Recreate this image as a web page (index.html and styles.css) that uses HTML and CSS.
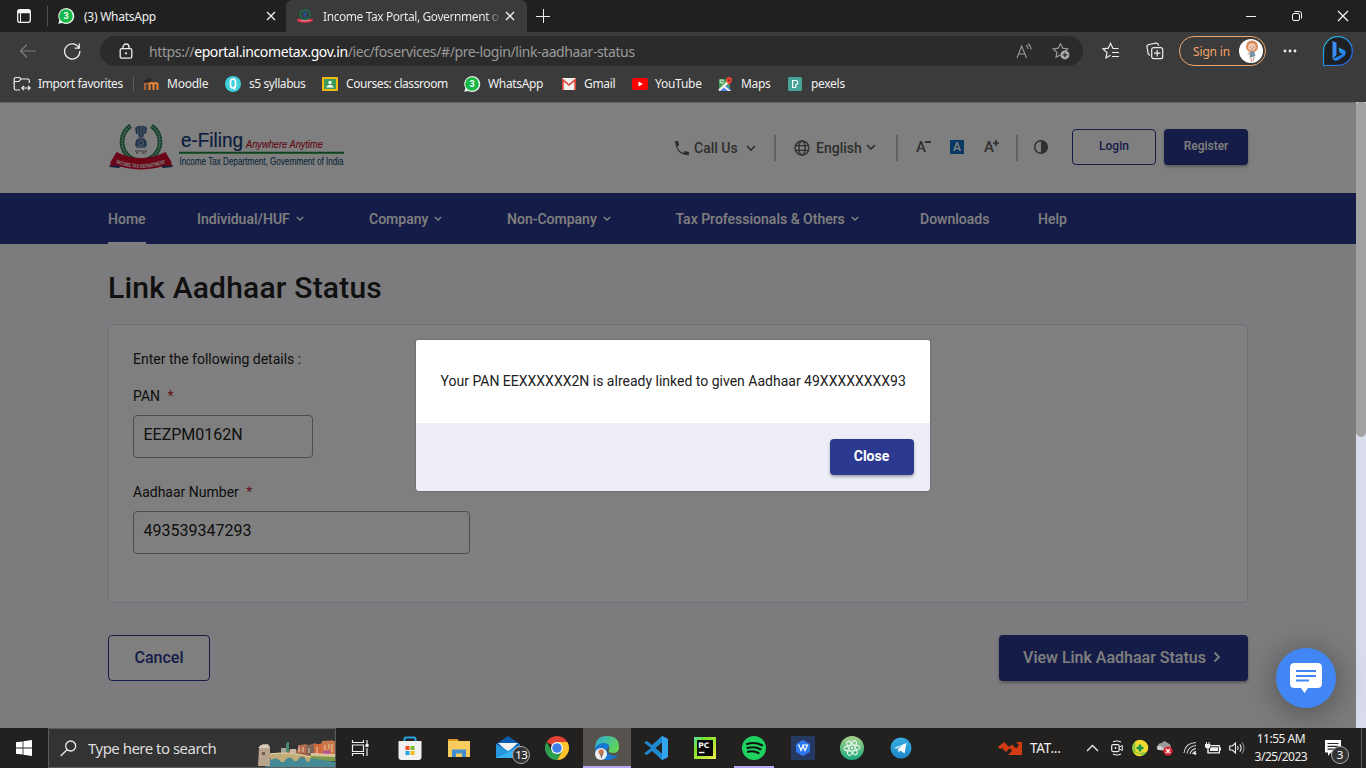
FILE: index.html
```html
<!DOCTYPE html>
<html lang="en">
<head>
<meta charset="utf-8">
<title>Income Tax Portal, Government of India</title>
<link rel="stylesheet" href="styles.css">
</head>
<body>
<svg width="0" height="0" class="defs" aria-hidden="true">
  <defs>
    <linearGradient id="bing" x1="0" y1="0" x2="1" y2="1"><stop offset="0" stop-color="#2ac3d8"/><stop offset="1" stop-color="#2458f0"/></linearGradient>
    <linearGradient id="edge" x1="0" y1="0" x2="1" y2="0.5"><stop offset="0" stop-color="#2aa9df"/><stop offset="1" stop-color="#61d45a"/></linearGradient>
    <linearGradient id="atom" x1="0" y1="0" x2="0" y2="1"><stop offset="0" stop-color="#a9d18a"/><stop offset="1" stop-color="#18a97c"/></linearGradient>
    <linearGradient id="tele" x1="0" y1="0" x2="0" y2="1"><stop offset="0" stop-color="#37aee2"/><stop offset="1" stop-color="#1c88c8"/></linearGradient>
    <linearGradient id="pyc" x1="0" y1="0" x2="1" y2="1"><stop offset="0" stop-color="#4ee0a0"/><stop offset=".3" stop-color="#7de22c"/><stop offset="1" stop-color="#f2e84a"/></linearGradient>
  </defs>
  <symbol id="close" viewBox="0 0 10 10"><path d="m1 1 8 8M9 1 1 9" fill="none" stroke="#f2f2f2" stroke-width="1.3"/></symbol>
  <symbol id="chev" viewBox="0 0 10 6"><path d="m1 1 4 4 4-4" fill="none" stroke="currentColor" stroke-width="1.7"/></symbol>
</svg>

<div class="tabbar">
  <svg class="workspace" width="16" height="16" viewBox="0 0 16 16"><rect x="1.700" y="1.700" width="12.600" height="12.600" rx="2" fill="none" stroke="#f4f4f4" stroke-width="1.300"/><path d="M2 2h12v3.200H2zM4 5h1v9H4z" fill="#f4f4f4"/></svg>
  <i class="tab-sep"></i>
  <svg class="tab-ico" width="16" height="16" viewBox="0 0 16 16"><path d="M.3 15.700 1.300 12A8 8 0 1 1 4.300 15Z" fill="#e8f5ea"/><circle cx="8" cy="8" r="6.800" fill="#18b848"/><text x="8" y="11.400" text-anchor="middle" class="wa-num">3</text></svg>
  <span class="tab-title">(3) WhatsApp</span>
  <svg class="tab-x" width="10" height="10"><use href="#close"/></svg>
  <div class="tab-active">
    <svg width="16" height="16" viewBox="0 0 16 16"><circle cx="8" cy="6.500" r="4.800" fill="none" stroke="#17744a" stroke-width="1.400"/><path d="M6.500 3.500h3v5.500h-3z" fill="#21508e"/><path d="M.6 10.200q7.400 4.500 14.800 0l.4 3q-7.800 3-15.600 0z" fill="#e3344a"/><path d="M3 12q5 1.800 10 0" stroke="#f5aab2" stroke-width=".8" fill="none"/></svg>
    <span class="tab-title">Income Tax Portal, Government o</span>
    <svg class="tab-x2" width="10" height="10"><use href="#close"/></svg>
  </div>
  <svg class="newtab" width="14" height="14" viewBox="0 0 14 14"><path d="M7.500 0v14M0 7.500h14" stroke="#eee" fill="none"/></svg>
  <div class="winctl">
    <svg width="12" height="12" viewBox="0 0 12 12"><path d="M1 6.500h10" stroke="#f4f4f4"/></svg>
    <svg width="12" height="12" viewBox="0 0 12 12"><rect x="1.500" y="3.500" width="7" height="7" rx="1.500" fill="none" stroke="#f4f4f4"/><path d="M3.500 1.500h5q2 0 2 2v5" fill="none" stroke="#f4f4f4"/></svg>
    <svg width="12" height="12" viewBox="0 0 12 12"><path d="m1 1 10 10M11 1 1 11" fill="none" stroke="#fff" stroke-width="1.100"/></svg>
  </div>
</div>

<div class="toolbar">
  <svg class="back" width="18" height="16" viewBox="0 0 18 16"><path d="M17 8H1.500M8 1.500 1.500 8 8 14.500" fill="none" stroke="#7d7d7d" stroke-width="1.200"/></svg>
  <svg class="reload" width="18" height="18" viewBox="0 0 18 18"><path d="M16 6A7.600 7.600 0 1 0 16.800 9M16.300 1.500V6.200H11.600" fill="none" stroke="#eee" stroke-width="1.300"/></svg>
  <div class="address">
    <svg class="lock" width="14" height="16" viewBox="0 0 14 16"><rect x="1.200" y="5.600" width="11.600" height="9.600" rx="1.500" fill="none" stroke="#eee" stroke-width="1.300"/><path d="M4 5.500V4a3 3 0 0 1 6 0v1.500" fill="none" stroke="#eee" stroke-width="1.300"/><circle cx="7" cy="10.300" r="1.100" fill="#eee"/></svg>
    <span class="url">https://<b>eportal.incometax.gov.in</b>/iec/foservices/#/pre-login/link-aadhaar-status</span>
    <svg class="aloud" width="16" height="16" viewBox="0 0 16 16"><path d="M1 15 5.700 3 10.500 15M2.600 11h6.300M10 2.200q2 1.300 2 3.800M12 .7q3 2.300 3 5.800" fill="none" stroke="#999" stroke-width="1.100"/></svg>
    <svg class="addfav" width="18" height="18" viewBox="0 0 18 18"><path d="m8.500 1.500 2.200 4.700 5 .7-3.600 3.500M8.500 12.800 4 15.300l.9-5L1.200 6.900l5.100-.7 2.200-4.700" fill="none" stroke="#999" stroke-width="1.200"/><circle cx="12.900" cy="12.900" r="4.500" fill="#aaa"/><path d="M12.900 10.500v4.800M10.500 12.900h4.800" stroke="#2b2b2b" stroke-width="1.100"/></svg>
  </div>
  <svg class="favs" width="18" height="18" viewBox="0 0 18 18"><path d="M16.500 6.500H11L8.500 1.300 6.300 6.200l-5.300.7 4 3.700-1 5.300 4.500-2.600M10 10.500h7M10 14.500h7" fill="none" stroke="#eee" stroke-width="1.200"/></svg>
  <svg class="coll" width="18" height="18" viewBox="0 0 18 18"><rect x="5.700" y="5.700" width="11" height="11" rx="2" fill="none" stroke="#eee" stroke-width="1.200"/><path d="M11.200 8v6.400M8 11.200h6.400M4 13.500 2.200 12 1 5Q.8 3 3 2.500l7-1.300q1.700-.2 2.200 1.300l.4 1.300" fill="none" stroke="#eee" stroke-width="1.200"/></svg>
  <div class="signin"><span>Sign in</span>
    <svg width="24" height="24" viewBox="0 0 24 24"><circle cx="12" cy="12" r="12" fill="#fff"/><circle cx="13" cy="7.500" r="6" fill="#d58a5c"/><circle cx="12.800" cy="8" r="3.800" fill="#f3cdb8"/><path d="M10.500 8h1.500M13.500 8H15M12 10h2" stroke="#8c5a48" stroke-width=".7"/><path d="m11 12.500 4-.5 1.500 5-6 2z" fill="#7795a5"/><path d="m12 19 .5 4M15 18l-1 4M11 13l-2.500 3" stroke="#c98b73" stroke-width="1"/></svg>
  </div>
  <svg class="dots" width="14" height="4" viewBox="0 0 14 4"><circle cx="2" cy="2" r="1.400" fill="#eee"/><circle cx="7" cy="2" r="1.400" fill="#eee"/><circle cx="12" cy="2" r="1.400" fill="#eee"/></svg>
  <svg class="bing" width="32" height="32" viewBox="0 0 32 32"><path d="M1.500 30.500V16A14.400 14.400 0 1 1 16 30.400Z" fill="#1d1f22" stroke="url(#bing)" stroke-width="1.200"/><path d="m10.500 6 4 1.500V20l-4 4z" fill="#3e8df5"/><path d="m16.500 12.500 6.500 3q2 3-1 6l-6.500 4q-3 1-5-1.500l10-4.700-3-1.700z" fill="url(#bing)"/></svg>
</div>

<div class="favbar">
  <div class="fav f1"><svg width="18" height="16" viewBox="0 0 18 16"><path d="M16.300 7V4.500q0-1.500-1.500-1.500H8L6.500 1.500H3Q1.200 1.500 1.200 3v9.500Q1.200 14 3 14h4M1.500 5.500H6L8 3M9 12h8M11 9.800 8.800 12 11 14.200M15 9.800 17.200 12 15 14.200" fill="none" stroke="#eee" stroke-width="1.200"/></svg><span>Import favorites</span></div>
  <i class="fav-sep"></i>
  <div class="fav f2"><svg width="16" height="14" viewBox="0 0 16 14"><path d="M6.500 13V8q0-2 2-2t2 2v5M10.500 8q0-2 2-2t2 2v5" fill="none" stroke="#ef8532" stroke-width="2"/><path d="M2 13V7l4-1" fill="none" stroke="#a96439" stroke-width="2"/><path d="m0 4 7-3 2 2-5 3z" fill="#272727"/></svg><span>Moodle</span></div>
  <div class="fav f3"><svg width="16" height="16" viewBox="0 0 16 16"><circle cx="8" cy="8" r="8" fill="#3fd0dc"/><rect x="5.500" y="3" width="5" height="9" rx="2.400" fill="none" stroke="#fff" stroke-width="1.700"/><path d="m8 11 2.500 2.500" stroke="#fff" stroke-width="1.500"/></svg><span>s5 syllabus</span></div>
  <div class="fav f4"><svg width="16" height="14" viewBox="0 0 16 14"><rect width="16" height="14" rx="1" fill="#f4b912"/><path d="M2 2h12v10H2z" fill="#3c9b58"/><circle cx="8" cy="5.500" r="1.700" fill="#fff"/><path d="M4.500 10.500q0-2.500 3.500-2.500t3.500 2.500z" fill="#fff"/></svg><span>Courses: classroom</span></div>
  <div class="fav f5"><svg width="16" height="16" viewBox="0 0 16 16"><path d="M.3 15.700 1.300 12A8 8 0 1 1 4.300 15Z" fill="#e8f5ea"/><circle cx="8" cy="8" r="6.800" fill="#18b848"/><text x="8" y="11.400" text-anchor="middle" class="wa-num">3</text></svg><span>WhatsApp</span></div>
  <div class="fav f6"><svg width="14" height="12" viewBox="0 0 14 12"><path d="M0 0h14v12H0z" fill="#f1eeee"/><path d="M0 12V0l7 6 7-6v12h-1.700V3.500L7 8 1.700 3.500V12z" fill="#dc4438"/></svg><span>Gmail</span></div>
  <div class="fav f7"><svg width="16" height="12" viewBox="0 0 16 12"><rect width="16" height="12" rx="2.500" fill="red"/><path d="m6.500 3.500 4.300 2.500-4.300 2.500z" fill="#fff"/></svg><span>YouTube</span></div>
  <div class="fav f8"><svg width="15" height="15" viewBox="0 0 15 15"><path d="M1 2h11v12H1z" fill="#3b9b50"/><path d="m1 14 7-7 5 6v1z" fill="#4682e8"/><path d="m0 13 9-9 2 2-9 8zM7 9l6 5h-3L5 10z" fill="#f0eee4"/><circle cx="3.700" cy="4.500" r="1.700" fill="none" stroke="#fff"/><path d="M8 3a3 3 0 1 1 6 0q0 2-3 5-3-3-3-5" fill="#e54436"/><circle cx="11" cy="3.200" r="1" fill="#8e2720"/></svg><span>Maps</span></div>
  <div class="fav f9"><svg width="14" height="14" viewBox="0 0 14 14"><rect width="14" height="14" rx="1.500" fill="#45a597"/><path d="M4.600 3.500h3.200q2 0 2 2.100T7.800 7.700V10.500H4.600z" fill="none" stroke="#fff" stroke-width="1.100"/></svg><span>pexels</span></div>
</div>

<main class="viewport">
  <div class="page">
    <header class="head">
      <svg class="logo" width="238" height="50" viewBox="0 0 238 50">
        <path d="M22.500 3A19 19 0 1 0 43.500 3" fill="none" stroke="#4d9c74" stroke-width="4.500"/>
        <path d="M22.500 3A19 19 0 1 0 43.500 3" fill="none" stroke="#1c7a4a" stroke-width="4.500" stroke-dasharray="1.500 1.500"/>
        <path d="M22.500 3A19 19 0 1 0 43.500 3" fill="none" stroke="#c5dccf" stroke-width=".8"/>
        <g fill="#466a98"><path d="M27 5q3-3 6-2 4-1 6 2l-1 6h-2l-1 4h-4l-1-4h-2zM28 17q5-4 10 0l1 5-2 3h-8l-2-3z"/></g>
        <path d="M30 4v7M33 3v12M36 4v7M29 15h8M28 24h10" stroke="#b8c8d8" stroke-width=".8"/><circle cx="33" cy="20" r="2.500" fill="none" stroke="#c4d0df" stroke-width=".8"/>
        <path d="M27 28h12M28 30h3M34 30h4" stroke="#555" stroke-width="1.100" stroke-dasharray="2 .6"/>
        <path d="m1 44 7-7 7 4-4 4zM65 44l-7-7-7 4 4 4z" fill="#1d407d"/>
        <path d="m1 43 4-5h5l-3 5zM65 43l-4-5h-5l3 5z" fill="#c91634"/>
        <path d="M8.500 29Q33 41 57.500 29L64 40Q33 53 2 40Z" fill="#d80b2e"/>
        <path id="ribbon" d="M8 40Q33 50 58 40" fill="none"/>
        <text class="ribbon-text"><textPath href="#ribbon" textLength="51" lengthAdjust="spacingAndGlyphs">INCOME TAX DEPARTMENT</textPath></text>
        <text x="73" y="24" class="lg1" textLength="62" lengthAdjust="spacingAndGlyphs">e-Filing</text>
        <text x="138" y="24.500" class="lg2" textLength="77" lengthAdjust="spacingAndGlyphs">Anywhere Anytime</text>
        <path d="M71 29.700h165" stroke="#1b8a3c" stroke-width="2"/>
        <text x="71.500" y="41.500" class="lg3" textLength="164" lengthAdjust="spacingAndGlyphs">Income Tax Department, Government of India</text>
      </svg>
      <svg class="phone" width="16" height="16" viewBox="0 0 16 16"><path d="M1 1h3.200l1 4-2.100 2.200q2 3.800 5.900 5.900L11 11l4 1v3.200Q2 15.500 1 1z" fill="currentColor"/></svg>
      <span class="callus">Call Us</span>
      <svg class="c1" width="10" height="6"><use href="#chev"/></svg>
      <i class="hsep s1"></i>
      <svg class="globe" width="16" height="16" viewBox="0 0 16 16"><g fill="none" stroke="currentColor" stroke-width="1.400"><circle cx="8" cy="8" r="7"/><ellipse cx="8" cy="8" rx="3.100" ry="7"/><path d="M1.500 5.600h13M1.500 10.400h13"/></g></svg>
      <span class="english">English</span>
      <svg class="c2" width="10" height="6"><use href="#chev"/></svg>
      <i class="hsep s2"></i>
      <span class="sizer minus">A<svg width="6" height="2" viewBox="0 0 6 2"><path d="M0 1h6" stroke="currentColor" stroke-width="2"/></svg></span>
      <span class="sizer norm">A</span>
      <span class="sizer plus">A<svg width="6" height="6" viewBox="0 0 6 6"><path d="M0 3h6M3 0v6" stroke="currentColor" stroke-width="1.700"/></svg></span>
      <i class="hsep s3"></i>
      <svg class="contrast" width="16" height="16" viewBox="0 0 16 16"><circle cx="8" cy="8" r="6.300" fill="none" stroke="currentColor" stroke-width="1.500"/><path d="M8 1.500a6.500 6.500 0 0 1 0 13z" fill="currentColor"/></svg>
      <span class="btn outline login">Login</span>
      <span class="btn solid register">Register</span>
    </header>
    <nav class="nav">
      <a class="n1">Home</a>
      <a class="n2">Individual/HUF <svg width="8" height="5"><use href="#chev"/></svg></a>
      <a class="n3">Company <svg width="8" height="5"><use href="#chev"/></svg></a>
      <a class="n4">Non-Company <svg width="8" height="5"><use href="#chev"/></svg></a>
      <a class="n5">Tax Professionals &amp; Others <svg width="8" height="5"><use href="#chev"/></svg></a>
      <a class="n6">Downloads</a>
      <a class="n7">Help</a>
    </nav>
    <section class="content">
      <h1>Link Aadhaar Status</h1>
      <div class="card">
        <p class="intro">Enter the following details :</p>
        <label>PAN <em>*</em></label>
        <div class="input pan">EEZPM0162N</div>
        <label>Aadhaar Number <em>*</em></label>
        <div class="input aad">493539347293</div>
      </div>
      <div class="actions">
        <span class="btn outline cancel">Cancel</span>
        <span class="btn solid view">View Link Aadhaar Status <svg width="8" height="12" viewBox="0 0 8 12"><path d="m1.500 1.500 4.500 4.500-4.500 4.500" fill="none" stroke="currentColor" stroke-width="1.800"/></svg></span>
      </div>
    </section>
  </div>
  <div class="scroll"><div class="thumb"></div></div>
  <div class="overlay"></div>
  <div class="modal">
    <p>Your PAN EEXXXXXX2N is already linked to given Aadhaar 49XXXXXXXX93</p>
    <div class="modal-foot"><span class="btn solid close">Close</span></div>
  </div>
  <div class="chat"><svg width="32" height="31" viewBox="0 0 32 31"><path d="M4.500 0h23Q32 0 32 4.500v16Q32 25 27.500 25H18l-3.500 5L11 25H4.500Q0 25 0 20.500v-16Q0 0 4.500 0z" fill="#fff"/><path d="M6 8h20M6 13h20M6 17.500h13" stroke="#4285f4" stroke-width="2"/></svg></div>
</main>

<footer class="taskbar">
  <div class="start"><svg width="16" height="16" viewBox="0 0 16 16"><path d="m0 2.300 6.600-.9v6.200H0zM7.400 1.300 16 0v7.600H7.400zM0 8.400h6.600v6.200L0 13.700zM7.400 8.400H16V16l-8.600-1.200z" fill="#fff"/></svg></div>
  <div class="search">
    <svg width="17" height="17" viewBox="0 0 17 17"><circle cx="10.700" cy="6" r="5" fill="none" stroke="#eee" stroke-width="1.300"/><path d="M7 9.700.7 16" stroke="#eee" stroke-width="1.300"/></svg>
    <span>Type here to search</span>
    <svg class="scene" width="78" height="27" viewBox="0 0 78 27">
      <path d="m24 13 6-3h10l3-5 5-1 4 1 6-2 4 2 4-4 10-1v18H24z" fill="#94644f"/>
      <path d="M24 8h6v5h-6z" fill="#aaa39b"/><path d="M30 2h2v10h-3V5z" fill="#4d8b75"/><path d="M33 9h6v4h-6z" fill="#c9b7a3"/><path d="M41 5h8v8h-8z" fill="#b76e50"/><path d="M50 6h7v8h-7z" fill="#78635c"/><path d="M57 4h8v12h-8z" fill="#d2663d"/><path d="M65 1h13v14H65z" fill="#c9764c"/><path d="M66 11h7v5h-7z" fill="#b44da0"/><path d="m54 14 24 2v5H50z" fill="#7d9a4a"/><path d="m54 13 24 1v3l-24-1z" fill="#d9c39b"/>
      <path d="M42 7v5M46 7v5M52 8v5M60 7v7M68 5v5M72 4v5M75 4v8" stroke="#f2d6b3" stroke-width=".9"/>
      <path d="M11 19q30-4 67 3v5H8z" fill="#458997"/><path d="M12 14q18-3 42 3l-2 5-3-1q-1-6-6-4l-3 4h-3q-3-6-8-2l-2 3h-3q-4-6-10-2z" fill="#c2ad79"/><path d="M12 14q20-3 42 3" fill="none" stroke="#e5d8aa"/>
      <path d="m3 6 3-2h5l2 3v19H1l1-18z" fill="#b8a38d"/><path d="m1 8 3-3h7l2 3z" fill="#d8ccbc"/><path d="M5 12h3v3H5z" fill="#6e5b50"/>
    </svg>
  </div>
  <svg class="taskview" width="18" height="18" viewBox="0 0 18 18"><path d="M1.500 1v2.500h11V1M1.500 6h11v6.500h-11zM1.500 17v-2.500h11V17M16 1v4M16 9v8" fill="none" stroke="#f0f0f0" stroke-width="1.200"/><path d="M14.500 5h3v3h-3z" fill="#f0f0f0"/></svg>
  <div class="apps">
    <div class="app"><svg width="24" height="24" viewBox="0 0 24 24"><path d="M6.500 6V3q0-1.500 1.500-1.500h8Q17.500 1.500 17.500 3v3" fill="none" stroke="#2ba2df" stroke-width="2"/><path d="M.5 5h23v16q0 3-3 3h-17q-3 0-3-3z" fill="#f1f1f1"/><path d="M7.500 10h4v4h-4z" fill="#f04e24"/><path d="M12.500 10h4v4h-4z" fill="#7eb82c"/><path d="M7.500 15h4v4h-4z" fill="#24a4e5"/><path d="M12.500 15h4v4h-4z" fill="#f5b81e"/></svg></div>
    <div class="app"><svg width="24" height="24" viewBox="0 0 24 24"><path d="M1 3h9l2 2h11v16H1z" fill="#f8cc5c"/><path d="M1 3h9l1.500 2H1z" fill="#dc9420"/><path d="M5 21v-7.500h14V21h-4v-3.500H9V21z" fill="#438fd2"/></svg></div>
    <div class="app mail"><svg width="24" height="24" viewBox="0 0 24 24"><path d="M0 8 12 0l12 8-12 8z" fill="#0a5bae"/><path d="M2 7h20l-10 9z" fill="#f2f2f2"/><path d="M0 8v14h24V8l-12 7z" fill="#2696de"/><path d="m0 22 24-11v11z" fill="#38b2ee"/></svg><span class="badge">13</span></div>
    <div class="app"><svg width="24" height="24" viewBox="0 0 24 24"><path d="M12 12 1.600 6A12 12 0 0 1 22.400 6z" fill="#df4335"/><path d="M22.400 6A12 12 0 0 1 12 24l5.200-9L12 6z" fill="#fcc42c"/><path d="M1.600 6A12 12 0 0 0 12 24l5.200-9H6.800z" fill="#2da04f"/><circle cx="12" cy="12" r="6" fill="#fff"/><circle cx="12" cy="12" r="4.800" fill="#3f7ee8"/></svg></div>
    <div class="app on"><svg width="24" height="24" viewBox="0 0 24 24"><path d="M0 13Q0 0 12 0t12 11q0 6-6 6-4.500 0-4.500-2.500 2-2 0-4.500Q8 5 0 13" fill="url(#edge)"/><path d="M0 13Q3 6 9.500 7q5 .5 4.500 4-4 2-1 6t10 2Q19 24 12 24 0 24 0 13" fill="#1878cf"/><circle cx="6" cy="18" r="6" fill="#eee"/><circle cx="6.200" cy="16" r="2.700" fill="#c87955"/><path d="M5 18h3l-1.500 5z" fill="#78706d"/></svg></div>
    <div class="app"><svg width="24" height="24" viewBox="0 0 24 24"><path d="m18 0 6 3v18l-6 3-10-9-5 4-3-1.500 7-5.500-7-5.500L3 5l5 4zM18 6.500 11.500 12l6.500 5.500z" fill="#2188cd" fill-rule="evenodd"/><path d="m18 0 6 3v18l-6 3z" fill="#35a4ee"/></svg></div>
    <div class="app"><svg width="22" height="22" viewBox="0 0 22 22"><path d="M0 0h22v22H0z" fill="url(#pyc)"/><path d="M3 3h16v16H3z" fill="#0b0b0b"/><text x="4.200" y="11" class="pc">PC</text><path d="M5 15.500h5.500" stroke="#fff" stroke-width="1.400"/></svg></div>
    <div class="app under"><svg width="24" height="24" viewBox="0 0 24 24"><circle cx="12" cy="12" r="12" fill="#1ed35f"/><path d="M5 8q8-2.500 15 1.300M5.500 12q7-2 13 1.200M6 15.800q6-1.500 10.500 1.200" fill="none" stroke="#111" stroke-width="2.200" stroke-linecap="round"/></svg></div>
    <div class="app"><svg width="24" height="24" viewBox="0 0 24 24"><path d="M0 0h24v24H0z" fill="#263963"/><path d="m12 4 7 4v8l-7 4-7-4V8z" fill="#2e78ee"/><path d="M7 9h1l2 5.500L12 10l2 4.500L16.500 9H11" fill="none" stroke="#fff" stroke-width="1.200"/></svg></div>
    <div class="app"><svg width="24" height="24" viewBox="0 0 24 24"><circle cx="12" cy="12" r="12" fill="url(#atom)"/><g fill="none" stroke="#e6f5ed" stroke-width="1"><ellipse cx="12" cy="12" rx="3" ry="8" transform="rotate(25 12 12)"/><ellipse cx="12" cy="12" rx="3" ry="8" transform="rotate(85 12 12)"/><ellipse cx="12" cy="12" rx="3" ry="8" transform="rotate(145 12 12)"/></g><circle cx="12" cy="12" r="1.200" fill="#eee"/></svg></div>
    <div class="app"><svg width="22" height="22" viewBox="0 0 22 22"><circle cx="11" cy="11" r="10.500" fill="url(#tele)"/><path d="m4 11 12.500-5-2 10.500-4-3-2 2-.5-3.500 5-4.500-6.500 4z" fill="#fff"/></svg></div>
  </div>
  <svg class="stock" width="24" height="15" viewBox="0 0 24 15"><path d="m0 6 6-5 5 5 3-2.500 4 4L21 4l-3-3h6v13H10l4-4-2-3-4 4-4-4-2 1z" fill="#d23b12"/></svg>
  <span class="tat">TAT...</span>
  <svg class="up" width="13" height="8" viewBox="0 0 13 8"><path d="m1 7 5.500-5.500L12 7" fill="none" stroke="#eee" stroke-width="1.300"/></svg>
  <svg class="cam" width="12" height="16" viewBox="0 0 12 16"><path d="M2 2q4-2 8 0M2 14q4 2 8 0" fill="none" stroke="#eee" stroke-width="1.100"/><rect x=".7" y="4.600" width="7.500" height="7" rx="1.500" fill="none" stroke="#eee" stroke-width="1.200"/><circle cx="4.500" cy="8" r="1" fill="#eee"/><path d="m8.500 7 2.800-1.500v5L8.500 9" fill="none" stroke="#eee"/></svg>
  <svg class="plusico" width="16" height="16" viewBox="0 0 16 16"><circle cx="8" cy="8" r="8" fill="#8fc638"/><path d="M3 1.800A8 8 0 0 1 15.500 11Q13 13 10 12 3 10 3 1.800M1 12q5 2 10 3.400Q5 18 1 12" fill="#f3d92c"/><circle cx="8" cy="8" r="5" fill="#f0e23c"/><path d="M8 4.500v7M4.500 8h7" stroke="#17914b" stroke-width="2.600"/></svg>
  <svg class="cloud" width="17" height="16" viewBox="0 0 17 16"><path d="M2.500 10Q-1 8 2 5q1-2 3.500-2 3-3.500 6 0Q15 4 15 8L10 11z" fill="#9c9c9c"/><path d="M2 10q-2-3 1-4 3-.5 5 4z" fill="#d0d0d0"/><circle cx="12" cy="11" r="4.600" fill="#d92937"/><path d="m10 9 4 4M14 9l-4 4" stroke="#fff" stroke-width="1.200"/></svg>
  <svg class="wifi" width="14" height="14" viewBox="0 0 14 14"><g fill="none" stroke="#ddd" stroke-width="1.100"><path d="M1 12Q2 2 13 1.500M4 12.500Q5 5.500 13 4.500M7 13q1-4.500 6-5.500M9.500 13q.5-2 3.500-2.700"/></g><circle cx="12" cy="12.500" r="1.300" fill="#fff"/></svg>
  <svg class="batt" width="16" height="13" viewBox="0 0 16 13"><path d="M6 3.600h8.400v7.200H3V8" fill="none" stroke="#eee" stroke-width="1.200"/><path d="M6 5.300h7v3.800H5V7zM15 5.500h1v3h-1zM0 2h5.500v3L4 6.500H1.500L0 5zM1 0h1v2H1zM3.500 0h1v2h-1z" fill="#eee"/><path d="M3 6v5" stroke="#eee"/></svg>
  <svg class="sound" width="16" height="14" viewBox="0 0 16 14"><path d="M.7 5h2.600L6.500 2v10L3.300 9H.7z" fill="none" stroke="#eee" stroke-width="1.100"/><path d="M8.500 5q1.500 2 0 4M10.800 3.300q2.700 3.700 0 7.400" fill="none" stroke="#eee" stroke-width="1.100"/><path d="M13 1.500q4 5.500 0 11" fill="none" stroke="#888" stroke-width="1.100"/></svg>
  <div class="clock"><span class="time">11:55 AM</span><span class="date">3/25/2023</span></div>
  <div class="notif"><svg width="16" height="17" viewBox="0 0 16 17"><path d="M0 0h16v12.500H6L3 16v-3.500H0z" fill="#fff"/><path d="M2.500 3.500h11M2.500 6.300h11M2.500 9.100h7" stroke="#282725" stroke-width="1.200"/></svg><span class="badge">3</span></div>
  <i class="desk"></i>
</footer>
</body>
</html>
```
FILE: styles.css
```css
* { box-sizing: border-box; }
body { margin: 0; width: 1366px; height: 768px; overflow: hidden; display: flex; flex-direction: column; font-family: "Noto Sans", "Open Sans", sans-serif; font-size: 12px; color: #f0f0f0; background: #3b3b3b; }
svg { display: block; flex: none; overflow: visible; }
span { white-space: nowrap; flex: none; }
i { flex: none; display: block; }
p, h1 { margin: 0; }
.defs { position: absolute; }
.wa-num { font: bold 9px Roboto, sans-serif; fill: #fff; }

.tabbar { height: 32px; flex: none; display: flex; align-items: center; background: #202020; }
.workspace { margin-left: 16px; }
.tab-sep { width: 1px; height: 20px; background: #505050; margin-left: 15px; }
.tab-ico { margin-left: 10px; }
.tab-title { letter-spacing: -.25px; }
.tabbar > .tab-title { width: 182px; margin-left: 10px; }
.tab-active { width: 241px; height: 32px; margin-left: 10px; padding-left: 11px; display: flex; align-items: center; background: #3b3b3b; border-radius: 6px 6px 0 0; }
.tab-active .tab-title { width: 176px; margin-left: 10px; letter-spacing: -.42px; background: linear-gradient(90deg, #f0f0f0 163px, #555 176px); -webkit-background-clip: text; background-clip: text; color: transparent; }
.tab-x2 { margin-left: 6px; }
.newtab { margin-left: 9px; }
.winctl { display: flex; gap: 34px; margin-left: auto; margin-right: 17px; }

.toolbar { height: 38px; flex: none; display: flex; align-items: center; }
.back { margin-left: 19px; }
.reload { margin-left: 26px; }
.address { width: 983px; height: 30px; margin-left: 19px; border-radius: 15px; background: #2b2b2b; display: flex; align-items: center; }
.lock { margin-left: 19px; }
.url { width: 867px; margin-left: 16px; font-size: 14px; letter-spacing: -.39px; color: #9a9a9a; }
.url b { font-weight: 400; color: #fff; }
.addfav { margin-left: 20px; }
.favs { margin-left: 19px; }
.coll { margin-left: 26px; }
.signin { width: 87px; height: 30px; margin-left: 15px; padding: 0 2px 0 13px; border: 1px solid #f0a468; border-radius: 15px; display: flex; align-items: center; justify-content: space-between; color: #f0a468; letter-spacing: -.15px; }
.dots { margin-left: 17px; }
.bing { margin-left: 25px; }

.favbar { height: 32px; flex: none; display: flex; align-items: center; padding-bottom: 4px; }
.fav { display: flex; align-items: center; height: 20px; gap: 8px; letter-spacing: -.42px; flex: none; }
.fav span { padding-bottom: 1px; }
.f1 { margin-left: 13px; width: 120px; gap: 7px; }
.fav-sep { width: 1px; height: 16px; background: #5c5c5c; }
.f2 { margin-left: 9px; width: 82px; letter-spacing: -.25px; }
.f3 { width: 97px; }
.f4 { width: 142px; }
.f5 { width: 97px; letter-spacing: -.35px; }
.f6 { width: 71px; gap: 8px; letter-spacing: -.3px; padding-left: 1px; }
.f7 { width: 86px; gap: 7px; letter-spacing: -.25px; }
.f8 { width: 70px; gap: 8px; letter-spacing: -.3px; }
.f9 { gap: 9px; letter-spacing: -.3px; }

.viewport { position: relative; height: 626px; flex: none; display: flex; font-family: Roboto, sans-serif; }
.page { width: 1356px; background: #f8f8fc; color: #202020; }
.scroll { width: 10px; background: #d9dcec; }
.thumb { height: 335px; background: #a1a1a1; border-radius: 3px 3px 5px 5px; }
.overlay { position: absolute; inset: 0 10px 0 0; background: rgba(0, 0, 0, .5); border-top: 1px solid #666; }
.head { height: 91px; background: #fff; display: flex; align-items: center; color: #5e5e5e; font-size: 14px; font-weight: 500; }
.logo { margin: 0 0 0 108px; }
.lg1 { font: 20px "Liberation Sans", sans-serif; fill: #153a7c; stroke: #153a7c; stroke-width: .2px; }
.lg2 { font: italic 11.5px "Liberation Sans", sans-serif; fill: #c8102e; stroke: #c8102e; stroke-width: .15px; }
.lg3 { font: 11.5px "Liberation Sans", sans-serif; fill: #1c5276; stroke: #1c5276; stroke-width: .15px; }
.ribbon-text { font: bold 5.5px "Liberation Sans", sans-serif; fill: #fff; }
.phone { margin-left: 328px; }
.callus { margin-left: 4px; width: 44px; padding-top: 1px; }
.c1 { margin-left: 8px; }
.hsep { width: 2px; height: 26px; background: #c4c4c4; }
.s1 { margin-left: 18px; }
.globe { margin-left: 18px; }
.english { margin-left: 6px; width: 46px; }
.c2 { margin-left: 4px; margin-bottom: 2px; }
.s2 { margin-left: 20px; }
.sizer { font-size: 15px; line-height: 16px; color: #5e5e5e; margin-bottom: 2px; display: flex; }
.sizer svg { margin: 2px 0 0 -1px; }
.plus svg { margin-top: 1px; }
.minus { margin-left: 18px; width: 34px; }
.norm { width: 14px; height: 14px; line-height: 14px; justify-content: center; font-size: 12px; background: #1271c9; color: #fff; }
.plus { margin-left: 20px; width: 32px; }
.contrast { margin-left: 15px; margin-bottom: 2px; color: #5e5e5e; }
.btn { display: flex; align-items: center; justify-content: center; border-radius: 4px; font-weight: 500; padding-bottom: 1px; }
.solid { background: #2b3990; color: #fff; box-shadow: 0 2px 3px rgba(0, 0, 0, .3); }
.outline { border: 1px solid #2b3990; color: #2b3990; background: #fff; }
.login { width: 84px; height: 36px; margin: 0 0 2px 23px; font-size: 12px; }
.register { width: 84px; height: 36px; margin: 0 0 2px 8px; font-size: 12px; }
.nav { height: 51px; background: #2b3990; display: flex; color: #fff; font-size: 14px; font-weight: 500; padding-left: 108px; line-height: 49px; }
.nav a { display: flex; align-items: center; gap: 6px; white-space: nowrap; flex: none; padding-top: 2px; }
.nav svg { margin-bottom: 3px; }
.nav .n1 { width: 38px; margin-right: 51px; border-bottom: 2px solid #fff; padding-top: 4px; }
.n2 { width: 172px; }
.n3 { width: 138px; }
.n4 { width: 168.500px; }
.n5 { width: 244.500px; }
.n6 { width: 118px; }
.content { padding: 26px 108px 0; }
h1 { font-size: 30px; line-height: 36px; font-weight: 500; letter-spacing: .2px; height: 54px; }
.card { width: 1140px; height: 279px; border: 1px solid #dfdff0; border-radius: 4px; background: #fff; padding: 24px; font-size: 14px; }
.intro, label { display: block; line-height: 20px; height: 20px; }
.intro { margin-bottom: 17px; }
label em { font-style: normal; color: #c81e38; margin-left: 4px; }
.input { height: 43px; border: 1px solid #9a9a9a; border-radius: 4px; background: #fff; padding-left: 9.500px; font-size: 16px; line-height: 38px; margin-top: 9px; }
.pan { width: 180px; margin-bottom: 24px; }
.aad { width: 337px; }
.actions { display: flex; justify-content: space-between; margin-top: 32px; width: 1140px; }
.cancel { width: 102px; height: 46px; font-size: 16px; padding-bottom: 2px; }
.view { width: 249px; height: 46px; font-size: 16px; gap: 7px; padding: 0 3px 2px 0; }
.modal { position: absolute; left: 416px; top: 238px; width: 514px; height: 151px; border-radius: 2px 2px 4px 4px; background: #fff; color: #212121; overflow: hidden; box-shadow: 0 0 1px 1px rgba(90, 90, 115, .4); }
.modal p { height: 83px; line-height: 83px; padding-left: 24.500px; font-size: 14px; white-space: nowrap; }
.modal-foot { height: 68px; background: #ecedf6; padding: 16px; display: flex; justify-content: flex-end; }
.close { width: 84px; height: 36px; font-size: 14px; font-weight: 700; padding: 0 1px 2px 0; }
.chat { position: absolute; left: 1276px; top: 546px; width: 60px; height: 60px; border-radius: 50%; background: #4285f4; display: flex; align-items: center; justify-content: center; box-shadow: 0 4px 32px rgba(0, 0, 0, .38); }

.taskbar { position: relative; height: 40px; flex: none; display: flex; align-items: center; background: #22211f; }
.start { width: 48px; display: flex; justify-content: center; }
.search { width: 288px; height: 40px; border: 1px solid #5c5c5c; background: #333; display: flex; align-items: center; padding-left: 11px; font-size: 15px; color: #ddd; }
.search span { margin-left: 11px; width: 169px; letter-spacing: -.52px; }
.scene { align-self: flex-end; }
.taskview { margin-left: 15px; }
.apps { display: flex; margin-left: 17px; gap: 1.150px; height: 40px; }
.app { width: 48px; height: 40px; display: flex; align-items: center; justify-content: center; position: relative; }
.on { background: #56534f; border-bottom: 2px solid #b4a7f4; padding-top: 2px; }
.under { background: linear-gradient(#b4a7f4, #b4a7f4) 50% 100% / 40px 2px no-repeat; }
.badge { position: absolute; width: 18px; height: 18px; border: 1px solid #aaa; border-radius: 50%; background: #333; color: #fff; font-size: 11.5px; line-height: 16px; text-align: center; letter-spacing: -.5px; }
.mail .badge { left: 28px; top: 18px; }
.pc { font: bold 7.500px "DejaVu Sans", sans-serif; fill: #fff; }
.stock { margin-left: 72.500px; }
.tat { margin-left: 8px; width: 56px; font-size: 13.500px; letter-spacing: -.15px; }
.cam { margin-left: 12px; }
.plusico { margin-left: 9px; }
.cloud { margin-left: 8px; }
.wifi { margin-left: 10px; }
.batt { margin-left: 8px; }
.sound { margin-left: 8px; }
.clock { width: 60px; margin-left: 6px; display: flex; flex-direction: column; align-items: center; line-height: 18px; letter-spacing: -.48px; padding-bottom: 1px; }
.notif { position: relative; width: 30px; height: 40px; margin-left: 14px; padding-top: 12px; }
.notif .badge { left: 6px; top: 18px; }
.desk { width: 1px; height: 40px; background: #5a5a5a; margin-left: 6px; }
```
